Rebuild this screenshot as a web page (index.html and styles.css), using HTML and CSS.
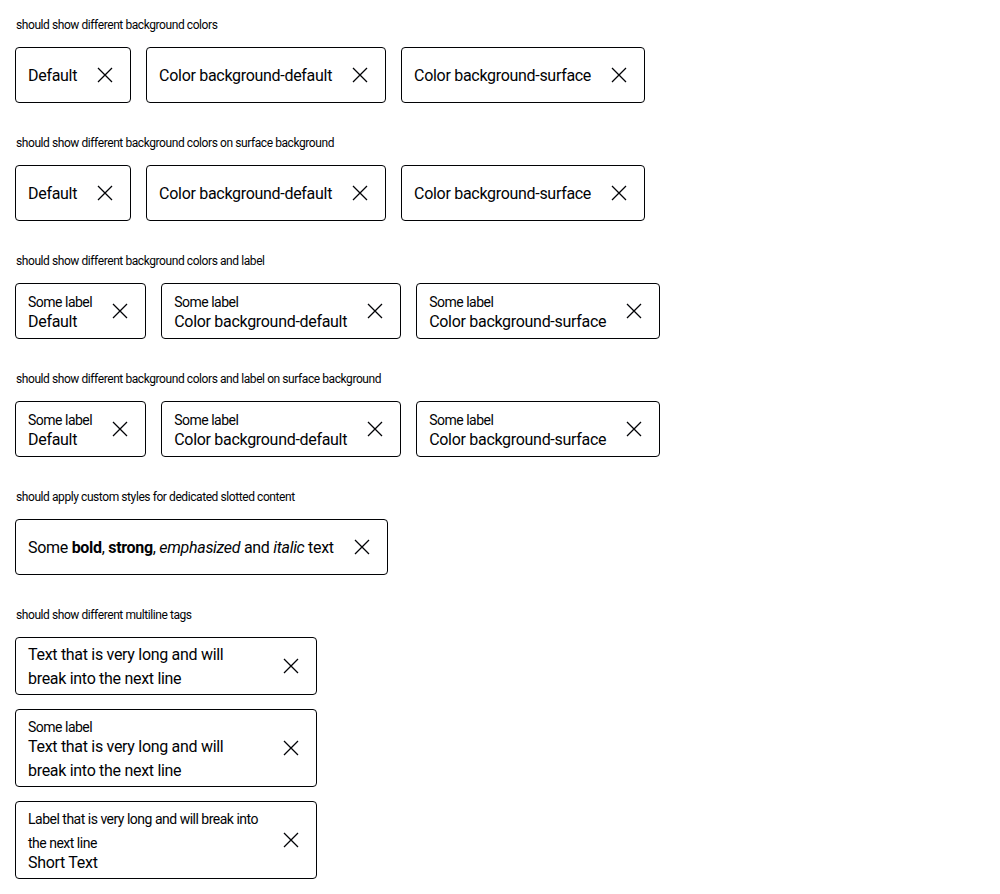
FILE: index.html
```html
<!DOCTYPE html>
<html lang="en">
<head>
<meta charset="utf-8">
<link rel="stylesheet" href="styles.css">
</head>
<body>
<main class="page">

  <section class="group">
    <p class="title">should show different background colors</p>
    <div class="row">
      <button class="tag"><span class="content"><span class="value">Default</span></span><span class="icon"><svg viewBox="0 0 24 24"><path d="M5 5L19 19M19 5L5 19"/></svg></span></button>
      <button class="tag"><span class="content"><span class="value">Color background-default</span></span><span class="icon"><svg viewBox="0 0 24 24"><path d="M5 5L19 19M19 5L5 19"/></svg></span></button>
      <button class="tag"><span class="content"><span class="value">Color background-surface</span></span><span class="icon"><svg viewBox="0 0 24 24"><path d="M5 5L19 19M19 5L5 19"/></svg></span></button>
    </div>
  </section>

  <section class="group">
    <p class="title">should show different background colors on surface background</p>
    <div class="row">
      <button class="tag"><span class="content"><span class="value">Default</span></span><span class="icon"><svg viewBox="0 0 24 24"><path d="M5 5L19 19M19 5L5 19"/></svg></span></button>
      <button class="tag"><span class="content"><span class="value">Color background-default</span></span><span class="icon"><svg viewBox="0 0 24 24"><path d="M5 5L19 19M19 5L5 19"/></svg></span></button>
      <button class="tag"><span class="content"><span class="value">Color background-surface</span></span><span class="icon"><svg viewBox="0 0 24 24"><path d="M5 5L19 19M19 5L5 19"/></svg></span></button>
    </div>
  </section>

  <section class="group">
    <p class="title">should show different background colors and label</p>
    <div class="row">
      <button class="tag"><span class="content"><span class="label">Some label</span><span class="value">Default</span></span><span class="icon"><svg viewBox="0 0 24 24"><path d="M5 5L19 19M19 5L5 19"/></svg></span></button>
      <button class="tag"><span class="content"><span class="label">Some label</span><span class="value">Color background-default</span></span><span class="icon"><svg viewBox="0 0 24 24"><path d="M5 5L19 19M19 5L5 19"/></svg></span></button>
      <button class="tag"><span class="content"><span class="label">Some label</span><span class="value">Color background-surface</span></span><span class="icon"><svg viewBox="0 0 24 24"><path d="M5 5L19 19M19 5L5 19"/></svg></span></button>
    </div>
  </section>

  <section class="group">
    <p class="title">should show different background colors and label on surface background</p>
    <div class="row">
      <button class="tag"><span class="content"><span class="label">Some label</span><span class="value">Default</span></span><span class="icon"><svg viewBox="0 0 24 24"><path d="M5 5L19 19M19 5L5 19"/></svg></span></button>
      <button class="tag"><span class="content"><span class="label">Some label</span><span class="value">Color background-default</span></span><span class="icon"><svg viewBox="0 0 24 24"><path d="M5 5L19 19M19 5L5 19"/></svg></span></button>
      <button class="tag"><span class="content"><span class="label">Some label</span><span class="value">Color background-surface</span></span><span class="icon"><svg viewBox="0 0 24 24"><path d="M5 5L19 19M19 5L5 19"/></svg></span></button>
    </div>
  </section>

  <section class="group">
    <p class="title">should apply custom styles for dedicated slotted content</p>
    <div class="row">
      <button class="tag"><span class="content"><span class="value">Some <b>bold</b>, <strong>strong</strong>, <em>emphasized</em> and <i>italic</i> text</span></span><span class="icon"><svg viewBox="0 0 24 24"><path d="M5 5L19 19M19 5L5 19"/></svg></span></button>
    </div>
  </section>

  <section class="group">
    <p class="title">should show different multiline tags</p>
    <div class="column">
      <button class="tag tag-narrow"><span class="content"><span class="value">Text that is very long and will break into the next line</span></span><span class="icon"><svg viewBox="0 0 24 24"><path d="M5 5L19 19M19 5L5 19"/></svg></span></button>
      <button class="tag tag-narrow"><span class="content"><span class="label">Some label</span><span class="value">Text that is very long and will break into the next line</span></span><span class="icon"><svg viewBox="0 0 24 24"><path d="M5 5L19 19M19 5L5 19"/></svg></span></button>
      <button class="tag tag-narrow"><span class="content"><span class="label">Label that is very long and will break into the next line</span><span class="value">Short Text</span></span><span class="icon"><svg viewBox="0 0 24 24"><path d="M5 5L19 19M19 5L5 19"/></svg></span></button>
    </div>
  </section>

</main>
</body>
</html>
```
FILE: styles.css
```css
* { box-sizing: border-box; }

html, body {
  margin: 0;
  padding: 0;
  background: #ffffff;
  color: #010205;
  font-family: Roboto, "Liberation Sans", sans-serif;
}

.page {
  padding: 16px 15px 0;
  display: flex;
  flex-direction: column;
  gap: 31px;
}

.group {
  display: flex;
  flex-direction: column;
  gap: 13px;
}

.title {
  margin: 0;
  padding-left: 1px;
  font-size: 12px;
  line-height: 18px;
  letter-spacing: -0.42px;
  color: #010205;
}

.row {
  display: flex;
  align-items: flex-start;
  gap: 15px;
}

.column {
  display: flex;
  flex-direction: column;
  align-items: flex-start;
  gap: 14px;
}

.tag {
  display: inline-flex;
  align-items: center;
  gap: 16px;
  min-height: 56px;
  margin: 0;
  padding: 5px 13px 3px 12px;
  border: 1px solid #010205;
  border-radius: 4px;
  background: #ffffff;
  color: #010205;
  font: inherit;
  text-align: left;
  cursor: pointer;
}

.tag-narrow {
  max-width: 302px;
}

.content {
  display: flex;
  flex-direction: column;
  flex: 1 1 auto;
  min-width: 0;
}

.label {
  font-size: 14px;
  line-height: 24px;
  letter-spacing: -0.5px;
}

.label + .value {
  margin-top: -4px;
}

.value {
  font-size: 16px;
  line-height: 24px;
  letter-spacing: -0.3px;
}

.value b,
.value strong {
  font-weight: 700;
}

.value em,
.value i {
  font-style: italic;
}

.icon {
  flex: 0 0 24px;
  width: 24px;
  height: 24px;
  display: block;
  margin-top: -2px;
}

.icon svg {
  display: block;
  width: 24px;
  height: 24px;
  fill: none;
  stroke: #010205;
  stroke-width: 1.3;
}
```
